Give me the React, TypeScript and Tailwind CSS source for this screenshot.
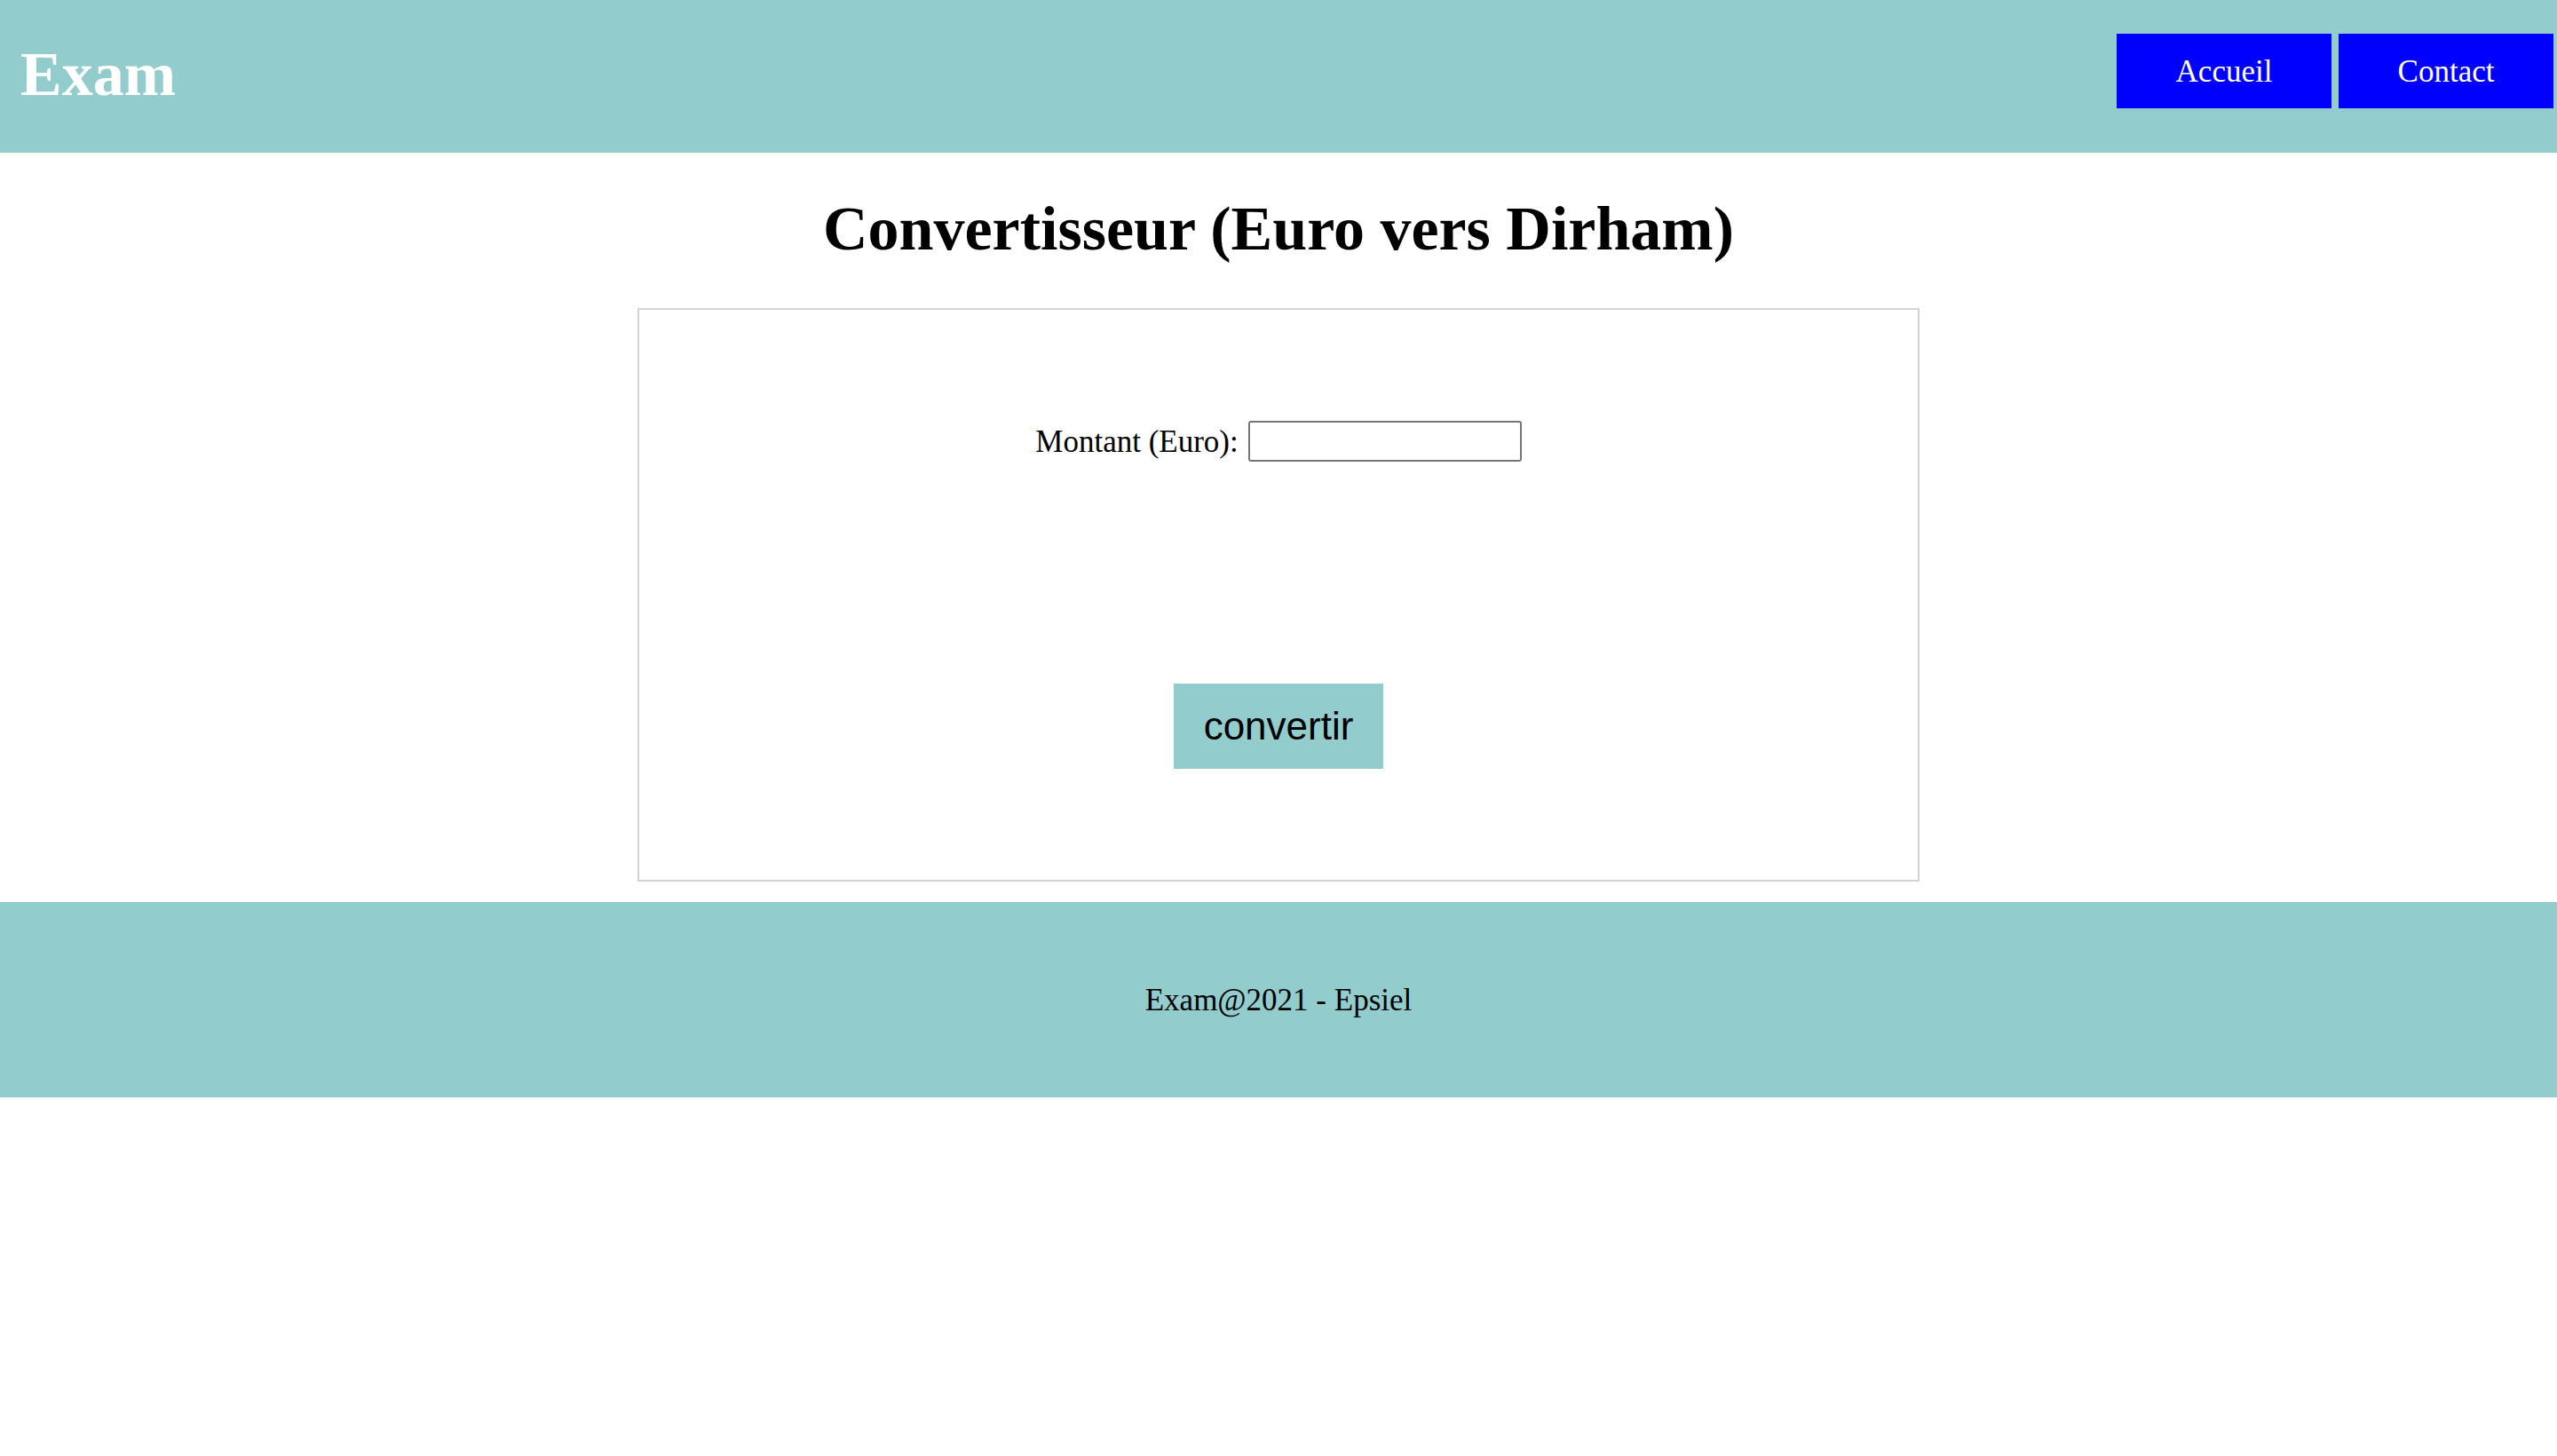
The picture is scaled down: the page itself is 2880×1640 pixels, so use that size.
export default function App() {
  return (
    <div className="min-h-screen bg-white font-['Liberation_Serif',serif] text-black">
      <header className="flex h-[172px] items-start justify-between bg-[#93cccd]">
        <h1 className="ml-[23px] mt-[49px] text-[70px] font-bold leading-none text-white">Exam</h1>
        <nav className="mr-[4px] mt-[38px] flex gap-[8px]">
          <a className="flex h-[84px] w-[242px] items-center justify-center bg-[#0000ff] text-[35px] leading-none text-white">
            Accueil
          </a>
          <a className="flex h-[84px] w-[242px] items-center justify-center bg-[#0000ff] text-[35px] leading-none text-white">
            Contact
          </a>
        </nav>
      </header>

      <main>
        <h2 className="mt-[51px] text-center text-[70px] font-bold leading-none">
          Convertisseur (Euro vers Dirham)
        </h2>

        <form className="mx-auto mt-[54px] flex h-[646px] w-[1444px] flex-col items-center border-2 border-[#d3d3d3]">
          <div className="mt-[125px] flex items-center gap-[11px]">
            <label className="text-[35px] leading-none">Montant (Euro):</label>
            <input
              type="text"
              className="h-[46px] w-[308px] rounded-[3px] border-2 border-[#767676] bg-white px-2 text-[26px] outline-none"
            />
          </div>
          <button
            type="button"
            className="mt-[250px] h-[96px] w-[236px] bg-[#93cccd] font-['Liberation_Sans',Arial,sans-serif] text-[44px] leading-none text-black"
          >
            convertir
          </button>
        </form>
      </main>

      <footer className="mt-[23px] flex h-[220px] items-center justify-center bg-[#93cccd]">
        <p className="text-[35px] leading-none">Exam@2021 - Epsiel</p>
      </footer>
    </div>
  )
}
